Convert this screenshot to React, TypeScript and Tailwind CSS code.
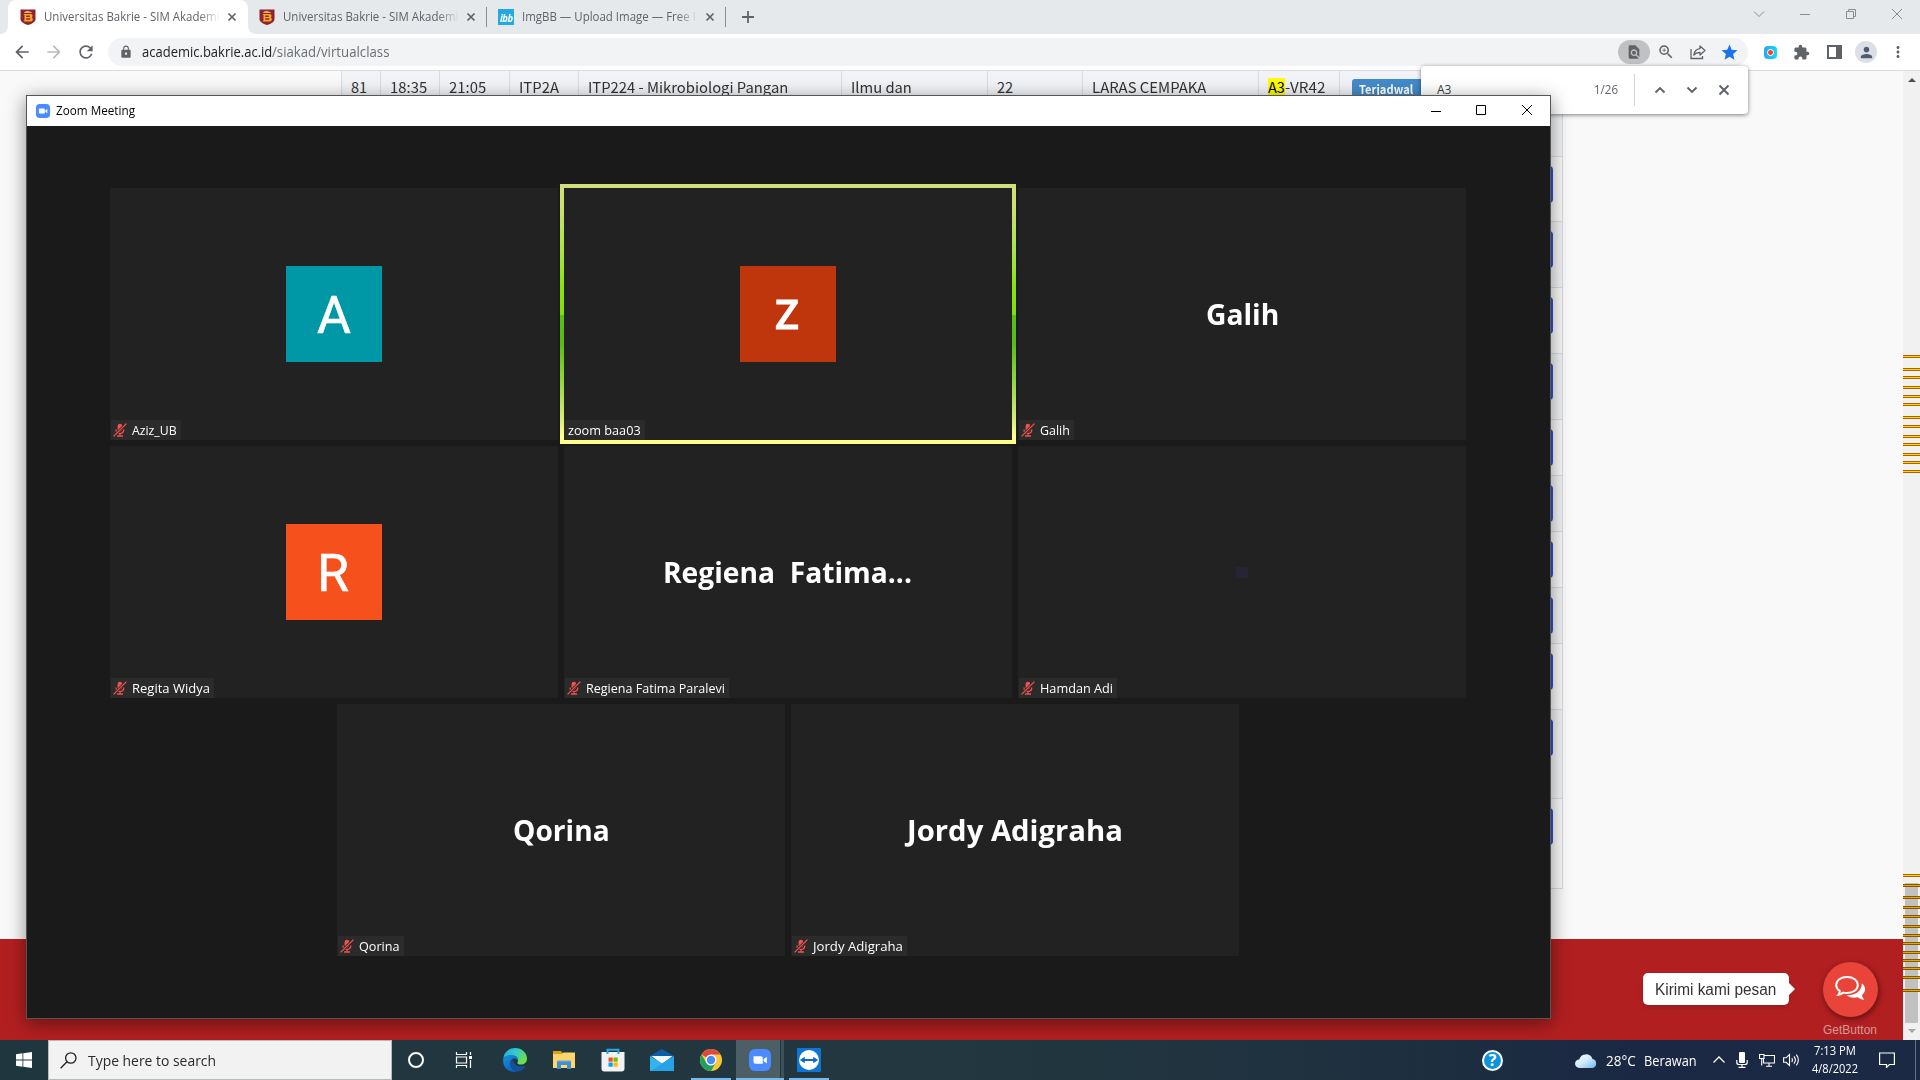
import { useLayoutEffect, useRef, useState, type ReactNode } from 'react';
import {
  MdArrowBack,
  MdArrowForward,
  MdRefresh,
  MdLock,
  MdZoomIn,
  MdStar,
  MdExtension,
  MdMoreVert,
  MdPerson,
  MdFindInPage,
} from 'react-icons/md';

/* Text squeezed or stretched horizontally to a fixed width. */
function Fit({ w, className = '', children }: { w: number; className?: string; children: ReactNode }) {
  const ref = useRef<HTMLSpanElement>(null);
  const [scale, setScale] = useState(1);
  useLayoutEffect(() => {
    if (ref.current) setScale(w / ref.current.offsetWidth);
  }, [w]);
  return (
    <span className={`block shrink-0 whitespace-pre ${className}`} style={{ width: w }}>
      <span ref={ref} className="inline-block origin-left" style={{ transform: `scaleX(${scale})` }}>
        {children}
      </span>
    </span>
  );
}

const ui = 'font-["Open_Sans","Noto_Sans",sans-serif]';

/* ---------- browser ---------- */

function Crest() {
  return (
    <svg viewBox="0 0 16 16" className="h-4 w-4 shrink-0">
      <path d="M.5.5h15V10c0 3-3 4.600-7.500 6C3.500 14.600.5 13 .5 10z" fill="#8e2430" />
      <path d="M3.500 5h7.300c2.200 0 2.200 3.200.7 3.500 2 .4 1.800 4-.7 4H3.500l1-1V6z" fill="#f7a823" />
      <path d="M6.200 6.600h3.600v1.300H6.200zM6.200 9.300h4v1.500h-4z" fill="#8e2430" />
      <path d="M4 4c1-2.400 2.600-1 3.800-2.200C9 3 11 2 12 4z" fill="#e9b06a" />
    </svg>
  );
}

function TabClose({ className = '' }: { className?: string }) {
  return (
    <svg viewBox="0 0 16 16" className={`h-4 w-4 shrink-0 ${className}`}>
      <path d="M4.500 4.500l7 7M11.500 4.500l-7 7" stroke="#5f6368" strokeWidth="1.7" />
    </svg>
  );
}

function TabTitle({ w, children }: { w: number; children: ReactNode }) {
  return (
    <div className="w-[176px] shrink-0 text-xs leading-5 text-[#5f6368] [mask-image:linear-gradient(to_right,black_88%,transparent_100%)]">
      <Fit w={w}>{children}</Fit>
    </div>
  );
}

function TabStrip() {
  return (
    <div className={`flex h-[34px] shrink-0 items-center bg-[#e5e9ec] text-[#5f6368] ${ui}`}>
      <div className="flex h-full w-2 shrink-0 items-end bg-white">
        <div className="h-full w-full rounded-br-lg bg-[#e5e9ec]" />
      </div>
      <div className="flex h-full w-[240px] shrink-0 items-center rounded-t-lg bg-white pl-3">
        <Crest />
        <div className="ml-2"><TabTitle w={175}>Universitas Bakrie - SIM Akademi</TabTitle></div>
        <TabClose className="ml-1" />
      </div>
      <div className="h-full w-2 shrink-0 bg-white">
        <div className="h-full w-full rounded-bl-lg bg-[#e5e9ec]" />
      </div>
      <div className="flex h-full w-[230px] shrink-0 items-center pl-[3px]">
        <Crest />
        <div className="ml-2"><TabTitle w={175}>Universitas Bakrie - SIM Akademi</TabTitle></div>
        <TabClose className="ml-1" />
      </div>
      <div className="h-5 w-px bg-[#8a8d91]" />
      <div className="flex h-full w-[238px] shrink-0 items-center pl-[11px]">
        <div className="flex h-4 w-4 items-center justify-center bg-[#23a8e0] text-[11px] font-bold italic leading-none tracking-tighter text-white">
          <Fit w={13}>ibb</Fit>
        </div>
        <div className="ml-2"><TabTitle w={174}>ImgBB — Upload Image — Free I</TabTitle></div>
        <TabClose className="ml-1" />
      </div>
      <div className="h-5 w-px bg-[#8a8d91]" />
      <svg viewBox="0 0 14 14" className="ml-[15px] h-3.5 w-3.5">
        <path d="M7 1v12M1 7h12" stroke="#5f6368" strokeWidth="1.800" />
      </svg>
      <div className="ml-auto flex h-full items-center pb-[6px]">
        <svg viewBox="0 0 12 12" className="mr-[34px] h-3 w-3" fill="none" stroke="#8b8e91">
          <path d="M1 3.500l5 5 5-5" />
        </svg>
        <svg viewBox="0 0 12 12" className="mr-[34px] h-3 w-3" stroke="#8b8e91">
          <path d="M1 6.500h10" />
        </svg>
        <svg viewBox="0 0 12 12" className="mr-[34px] h-3 w-3" fill="none" stroke="#8b8e91">
          <path d="M1.500 3.500h7v7h-7zM3.500 3.500v-2h7v7h-2" />
        </svg>
        <svg viewBox="0 0 12 12" className="mr-[17px] h-3 w-3" stroke="#8b8e91">
          <path d="M1 1l10 10M11 1L1 11" />
        </svg>
      </div>
    </div>
  );
}

function Toolbar() {
  return (
    <div className={`flex h-[37px] shrink-0 items-center border-b border-[#d9dbde] bg-white ${ui}`}>
      <MdArrowBack className="ml-3 h-5 w-5 text-[#5f6368]" />
      <MdArrowForward className="ml-3 h-5 w-5 text-[#b9bbbe]" />
      <MdRefresh className="ml-3 h-5 w-5 text-[#5f6368]" />
      <div className="ml-3 flex h-7 w-[1640px] shrink-0 items-center rounded-full bg-[#f1f3f4] pl-[11px]">
        <MdLock className="h-[14px] w-[14px] text-[#5f6368]" />
        <Fit w={130} className="ml-[9px] text-sm leading-5 text-[#202124]">academic.bakrie.ac.id</Fit>
        <Fit w={117} className="text-sm leading-5 text-[#6b6f73]">/siakad/virtualclass</Fit>
        <div className="ml-auto flex h-6 w-8 items-center justify-center rounded-full bg-[#bfc1c3]">
          <MdFindInPage className="h-4 w-4 text-[#5f6368]" />
        </div>
        <MdZoomIn className="ml-[7px] h-[18px] w-[18px] text-[#5f6368]" />
        <svg viewBox="0 0 16 16" className="ml-[15px] h-4 w-4" fill="none" stroke="#5f6368" strokeWidth="1.300">
          <path d="M1 5v9.500h11.500V12" />
          <path d="M10 2l5 4.500-5 4.500V8.500C7 8.400 5.200 9.300 3.800 11 4.300 7.500 6.500 5 10 4.600z" strokeLinejoin="round" />
        </svg>
        <MdStar className="ml-[14px] mr-[9px] h-[19px] w-[19px] text-[#1a73e8]" />
      </div>
      <div className="ml-4 flex h-[13px] w-[13px] items-center justify-center rounded-sm bg-gradient-to-r from-[#25a7fb] to-[#10dcf0]">
        <div className="h-[7px] w-[7px] rounded-full border border-white bg-[#f4432c]" />
      </div>
      <MdExtension className="ml-[16px] h-[17px] w-[17px] text-[#5f6368]" />
      <div className="ml-[17px] h-[14px] w-[15px] border-2 border-r-[6px] border-[#5f6368]" />
      <div className="ml-[13px] flex h-[22px] w-[22px] items-center justify-center rounded-full bg-[#dcdfe6]">
        <MdPerson className="h-[17px] w-[17px] text-[#4f5b71]" />
      </div>
      <MdMoreVert className="ml-[12px] h-[18px] w-[18px] text-[#5f6368]" />
    </div>
  );
}

const rows = [65, 66, 66, 66, 56, 56, 56, 56, 66, 89, 90];

function Cell({ className, children }: { className: string; children?: ReactNode }) {
  return (
    <div className={`shrink-0 border-r border-[#d9dbdd] pl-[9px] pt-[5px] leading-[22px] ${className}`}>{children}</div>
  );
}

function ClassTable() {
  return (
    <div className='ml-[341px] w-[1222px] border-l border-[#d9dbdd] font-["Noto_Sans_CJK_SC",sans-serif] text-[14.500px] text-[#333]'>
      <div className="flex h-[86px] border-b border-[#d9dbdd] bg-[#f2f3f6]">
        <Cell className="w-[39px]"><Fit w={16}>81</Fit></Cell>
        <Cell className="w-[59px]"><Fit w={37}>18:35</Fit></Cell>
        <Cell className="w-[70px] pl-[8px]"><Fit w={37}>21:05</Fit></Cell>
        <Cell className="w-[69px]"><Fit w={40}>ITP2A</Fit></Cell>
        <Cell className="w-[263px] pl-[8px]"><Fit w={200}>ITP224 - Mikrobiologi Pangan</Fit></Cell>
        <Cell className="w-[146px]"><Fit w={61}>Ilmu dan</Fit></Cell>
        <Cell className="w-[95px]"><Fit w={16}>22</Fit></Cell>
        <Cell className="w-[176px]"><Fit w={114}>LARAS CEMPAKA</Fit></Cell>
        <Cell className="flex w-[81px]">
          <Fit w={17} className="mt-0.5 h-5 bg-[#ffff00] leading-[18px] text-black">A3</Fit>
          <Fit w={40}>-VR42</Fit>
        </Cell>
        <div className="flex grow justify-start border-r border-[#d9dbdd] pl-[12px] pt-2">
          <div className="h-6 w-[74px] rounded-[3px] bg-[#428bca] pl-[7px] text-[12px] font-bold leading-[19px] text-white">
            <Fit w={54}>Terjadwal</Fit>
          </div>
        </div>
      </div>
      {rows.map((h, i) => (
        <div
          key={i}
          className={`flex justify-end border-b border-r border-[#d9dbdd] pr-[9px] pt-[9px] ${i % 2 ? 'bg-[#f2f3f6]' : 'bg-[#f9f9f9]'}`}
          style={{ height: h }}
        >
          <div className="h-[37px] w-20 rounded-[4px] bg-[#354fd0]" />
        </div>
      ))}
    </div>
  );
}

const marks = [
  356, 369, 377, 387, 396, 404, 417, 426, 436, 444, 454, 462, 471, 875, 885, 897, 907, 916, 926, 935, 943, 952, 960, 968,
  977, 990,
];

function Scrollbar() {
  return (
    <div className="relative flex w-[17px] shrink-0 flex-col items-center bg-[#f1f1f1]">
      <svg viewBox="0 0 8 4" className="mt-[7px] h-1 w-2"><path d="M4 0l4 4H0z" fill="#505050" /></svg>
      <div className="mt-auto h-[140px] w-[13px] bg-[#c1c1c1]" />
      <svg viewBox="0 0 8 4" className="mb-[7px] mt-1.5 h-1 w-2"><path d="M4 4l4-4H0z" fill="#a3a3a3" /></svg>
      {marks.map((y) => (
        <div
          key={y}
          className={`absolute left-0 h-[3px] w-full border-y ${y > 880 ? 'border-[#925000] bg-[#d4b106]' : 'border-[#b06000] bg-[#ffdd00]'}`}
          style={{ top: y - 72 }}
        />
      ))}
    </div>
  );
}

function FindBar() {
  return (
    <div className={`absolute left-[1421px] top-[66px] flex h-12 w-[327px] items-center rounded bg-white text-xs text-[#5f6368] shadow-[0_1px_4px_rgba(0,0,0,0.5)] ${ui}`}>
      <Fit w={14} className="ml-4 text-[#3c4043]">A3</Fit>
      <Fit w={24} className="ml-[143px]">1/26</Fit>
      <div className="ml-4 h-8 w-px bg-[#d4d6d9]" />
      <svg viewBox="0 0 12 12" className="ml-[19px] h-3 w-3" fill="none" stroke="#5f6368" strokeWidth="1.900"><path d="M1.500 8.500L6 4l4.500 4.500" /></svg>
      <svg viewBox="0 0 12 12" className="ml-5 h-3 w-3" fill="none" stroke="#5f6368" strokeWidth="1.900"><path d="M1.500 3.500L6 8l4.500-4.500" /></svg>
      <svg viewBox="0 0 12 12" className="ml-5 h-3 w-3" stroke="#5f6368" strokeWidth="2"><path d="M1.500 1.500l9 9M10.500 1.500l-9 9" /></svg>
    </div>
  );
}

function ChatWidget() {
  return (
    <div className='flex justify-end pr-[25px] pt-[23px] font-["Liberation_Sans",sans-serif]'>
      <div className="relative mt-[11px] flex h-8 w-[146px] items-center rounded-[5px] bg-white pl-3 pt-px text-base text-[#333] shadow-md">
        <Fit w={121}>Kirimi kami pesan</Fit>
        <svg viewBox="0 0 6 12" className="absolute -right-[6px] top-2.5 h-3 w-1.5"><path d="M0 0l6 6-6 6z" fill="#fff" /></svg>
      </div>
      <div className="ml-[34px] flex w-[55px] flex-col items-center">
        <div className="flex h-[55px] w-[55px] items-center justify-center rounded-full bg-[#e8443a] pb-[3px] pr-px shadow-[1px_2px_6px_rgba(0,0,0,0.5)]">
          <svg viewBox="0 0 32 26" className="h-[26px] w-8">
            <path d="M27.800 8.200c4.300 3.300 4.300 8.600.2 11.800.2 1.800 1 2.800 2.200 4.700-2.500-.2-4.600-1-6.300-2.400-4 1-8.600.2-11.400-2.100 8.500.4 15.600-4.400 15.300-12z" fill="#fff" />
            <path d="M13 2c6.200 0 10.800 3.400 10.800 8S19.200 18 13 18c-1.300 0-2.500-.1-3.700-.4-1.300 1.200-3 2-4.900 2.200.9-1.100 1.300-2.300 1.400-3.800C3.600 14.600 2.200 12.500 2.200 10 2.200 5.400 6.800 2 13 2z" fill="none" stroke="#fff" strokeWidth="2" />
          </svg>
        </div>
        <Fit w={54} className="-ml-px mt-[5px] text-xs leading-4 text-[#cf9a98]">GetButton</Fit>
      </div>
    </div>
  );
}

/* ---------- meeting window ---------- */

function ZoomLogo({ className }: { className: string }) {
  return (
    <svg viewBox="0 0 22 22" className={className}>
      <rect width="22" height="22" rx="6" fill="#4a8cff" />
      <path d="M4.500 7.200h7.300c1.300 0 2 .8 2 2v5.600H6.500c-1.300 0-2-.8-2-2zM14.600 10.200l3.200-2.500v6.700l-3.200-2.400z" fill="#fff" />
    </svg>
  );
}

function MutedMic() {
  return (
    <svg viewBox="0 0 14 14" className="h-3.5 w-3.5 shrink-0" fill="none">
      <rect x="4.600" y="0.800" width="4.600" height="7.800" rx="2.300" fill="#f0524f" />
      <path d="M3 6.500c.2 5.300 7.600 5.300 7.800 0M7 10.500v2.500M4 13h6" stroke="#f0524f" strokeWidth="1.300" />
      <path d="M.6 13.400L13.400.6" stroke="#2b2b2b" strokeWidth="2.800" />
      <path d="M.6 13.400L13.400.6" stroke="#f0524f" strokeWidth="1.300" />
    </svg>
  );
}

type Person = { name: string; w: number; muted: boolean; center: ReactNode; active?: boolean };

const big = (text: string, w: number) => <Fit w={w} className="text-[29px] font-bold leading-10 text-white">{text}</Fit>;

const people: Person[] = [
  {
    name: 'Aziz_UB', w: 45, muted: true,
    center: <div className="flex h-24 w-24 items-center justify-center bg-[#0097a7] pt-1 font-[Roboto] text-[52px] leading-none text-white [-webkit-text-stroke:0.6px_white]"><Fit w={34}>A</Fit></div>,
  },
  {
    name: 'zoom baa03', w: 73, muted: false, active: true,
    center: <div className="flex h-24 w-24 items-center justify-center bg-[#bf360c] pr-0.5 text-[40px] font-semibold leading-none text-white [-webkit-text-stroke:0.8px_white]"><Fit w={24}>Z</Fit></div>,
  },
  { name: 'Galih', w: 30, muted: true, center: big('Galih', 73) },
  {
    name: 'Regita Widya', w: 78, muted: true,
    center: <div className="flex h-24 w-24 items-center justify-center bg-[#f6511d] pr-0.5 pt-1 font-[Roboto] text-[52px] leading-none text-white [-webkit-text-stroke:0.6px_white]"><Fit w={32}>R</Fit></div>,
  },
  { name: 'Regiena Fatima Paralevi', w: 139, muted: true, center: <div className="pr-0.5">{big('Regiena  Fatima...', 249)}</div> },
  { name: 'Hamdan Adi', w: 73, muted: true, center: <div className="h-[11px] w-3 bg-[#252536]" /> },
  { name: 'Qorina', w: 41, muted: true, center: big('Qorina', 97) },
  { name: 'Jordy Adigraha', w: 90, muted: true, center: big('Jordy Adigraha', 216) },
];

function Tile({ p }: { p: Person }) {
  const body = (
    <div className={`relative flex h-[252px] w-[448px] items-center justify-center bg-[#222] ${ui}`}>
      {p.center}
      <div className={`absolute bottom-0 flex h-5 items-center bg-[#2b2b2b] text-xs leading-5 text-white ${p.muted ? 'left-px gap-[5px] pl-0.5 pr-1' : 'left-0 pl-1 pr-1'}`}>
        {p.muted && <MutedMic />}
        <Fit w={p.w} className="pt-0.5">{p.name}</Fit>
      </div>
    </div>
  );
  if (!p.active) return body;
  return (
    <div className="-m-1 bg-[linear-gradient(to_bottom,#d2df7c_0%,#cfe070_8%,#a5e43c_28%,#88e20c_40%,#84de0a_50.3%,#5cc010_50.4%,#58bc12_61%,#8fd43c_75%,#d6ea78_90%,#ffff8c_97%)] p-1">
      {body}
    </div>
  );
}

function MeetingWindow() {
  return (
    <div className="absolute left-[26px] top-[95px] flex h-[924px] w-[1525px] flex-col border border-[#555] bg-[#1a1a1a] shadow-[0_4px_18px_rgba(0,0,0,0.45)]">
      <div className={`flex h-[30px] shrink-0 items-center bg-white pl-[9px] text-xs text-black ${ui}`}>
        <ZoomLogo className="h-3.5 w-3.5" />
        <Fit w={79} className="ml-1.5">Zoom Meeting</Fit>
        <svg viewBox="0 0 12 12" className="mb-px ml-auto mr-[33px] h-3 w-3" stroke="#000"><path d="M1 6.500h10" /></svg>
        <svg viewBox="0 0 12 12" className="mb-0.5 mr-[34px] h-3 w-3" fill="none" stroke="#000"><path d="M1.500 1.500h9v9h-9z" /></svg>
        <svg viewBox="0 0 12 12" className="mb-0.5 mr-[17px] h-3 w-3" stroke="#000"><path d="M1 1l10 10M11 1L1 11" /></svg>
      </div>
      <div className="flex w-[1522px] flex-col items-center gap-1.5 pt-[62px]">
        {[people.slice(0, 3), people.slice(3, 6), people.slice(6)].map((group, i) => (
          <div key={i} className="flex gap-1.5">
            {group.map((p) => <Tile key={p.name} p={p} />)}
          </div>
        ))}
      </div>
    </div>
  );
}

/* ---------- taskbar ---------- */

function EdgeLogo() {
  return (
    <svg viewBox="0 0 24 24" className="h-6 w-6">
      <defs>
        <linearGradient id="edgeTop" x1="0" y1="0" x2="1" y2="0.500">
          <stop offset="0" stopColor="#2aa8dc" /><stop offset="0.500" stopColor="#31c7d5" /><stop offset="1" stopColor="#6be04a" />
        </linearGradient>
        <linearGradient id="edgeLow" x1="0" y1="0" x2="0.800" y2="1">
          <stop offset="0" stopColor="#1593df" /><stop offset="1" stopColor="#0b5cb5" />
        </linearGradient>
      </defs>
      <path d="M.3 10C1.200 4 6 0 12 0c7 0 12 5 12 10.500 0 4-3 6-6 6-2.500 0-4.300-1-3.600-2 1.600-2.200.3-6.700-4.200-6.700C6 7.600 2 8.500.3 10z" fill="url(#edgeTop)" />
      <path d="M.2 10.500C2 8 5 6.900 8 6.900c4.700 0 7.800 3 7 6.400-.5-2-2.200-3-4-2.700-2.800.5-4 3-3.600 5.800.5 3.500 3.500 6.500 7.500 7.200C7 25.400-1 20.500.2 10.500z" fill="url(#edgeLow)" />
      <path d="M10 10.900c-2.200 1-3 3.500-2.400 6 .9 4 4.500 6.800 8 6.500 3-.8 5.500-2.800 6.800-5.200.2-.5-.2-.7-.6-.5-5.800 2.500-11.600-.8-11.800-6.800z" fill="#134f9c" />
    </svg>
  );
}

function ExplorerIcon() {
  return (
    <svg viewBox="0 0 22 18" className="h-[18px] w-[22px]">
      <path d="M0 0h8l1.500 2H22v2H0z" fill="#e0a012" />
      <path d="M0 3h9l1.500-1.500H22V17H0z" fill="#ffd66b" />
      <path d="M4 18v-8h14v8h-4v-4H8v4z" fill="#3f8fd2" />
      <path d="M4 9.500h14v1.500H4z" fill="#5aa8e2" />
    </svg>
  );
}

function StoreIcon() {
  return (
    <svg viewBox="0 0 24 24" className="h-6 w-6">
      <path d="M6.500 6V1.800h11V6" fill="none" stroke="#27a7e8" strokeWidth="2" />
      <path d="M.5 4h23v16.500a3 3 0 0 1-3 3h-17a3 3 0 0 1-3-3z" fill="#f2f2f2" />
      <path d="M6.500 4v2M17.500 4v2" stroke="#27a7e8" strokeWidth="2" />
      <path d="M7.500 9.500h4.200v4.200H7.500z" fill="#f25022" /><path d="M12.500 9.500h4.200v4.200h-4.200z" fill="#7fba00" />
      <path d="M7.500 14.500h4.200v4.200H7.500z" fill="#00a4ef" /><path d="M12.500 14.500h4.200v4.200h-4.200z" fill="#ffb900" />
    </svg>
  );
}

function MailIcon() {
  return (
    <svg viewBox="0 0 24 22" className="h-[22px] w-6">
      <path d="M0 7L12 0l12 7v6H0z" fill="#0c5ea8" />
      <path d="M1.500 7h21L12 15z" fill="#f4f6f8" />
      <path d="M0 7l12 7.500L24 7v15H0z" fill="#34b4ef" />
      <path d="M24 7L4 20l-4 2h24z" fill="#1f9be3" opacity=".7" />
    </svg>
  );
}

function ChromeLogo() {
  return (
    <svg viewBox="0 0 22 22" className="h-[22px] w-[22px]">
      <circle cx="11" cy="11" r="11" fill="#fbc638" />
      <path d="M11 11L1.500 5.500A11 11 0 0 1 20.500 5.500H11z" fill="#db4a3e" />
      <path d="M1.500 5.500A11 11 0 0 0 11 22l4.800-8.200L6.300 13.700z" fill="#1fa15d" />
      <circle cx="11" cy="11" r="5.500" fill="#fff" />
      <circle cx="11" cy="11" r="4.200" fill="#4a8af4" />
    </svg>
  );
}

function TeamViewerIcon() {
  return (
    <svg viewBox="0 0 24 24" className="h-6 w-6">
      <rect width="24" height="24" rx="1" fill="#0d76d4" />
      <circle cx="12" cy="12" r="10" fill="#fff" />
      <path d="M2.800 12l5-3.300v2.200h8.400V8.700l5 3.300-5 3.300v-2.200H7.800v2.200z" fill="#0d6bc4" />
    </svg>
  );
}

function TaskItem({ children, running }: { children: ReactNode; running?: boolean }) {
  return (
    <div className="flex h-10 w-[49px] shrink-0 flex-col items-center">
      <div className="flex h-[38px] items-center pt-0.5">{children}</div>
      {running && <div className="h-0.5 w-10 bg-[#76b9ed]" />}
    </div>
  );
}

function Taskbar() {
  return (
    <div className={`relative z-10 flex h-10 shrink-0 items-center bg-[linear-gradient(to_right,#20363f_0%,#22373f_50%,#1e303f_72%,#1a2843_85%,#1b2944_100%)] text-white ${ui}`}>
      <div className="flex w-12 shrink-0 justify-center">
        <svg viewBox="0 0 16 16" className="h-4 w-4" fill="#fff">
          <path d="M0 2.200L6.500 1.300v6.200H0zM7.300 1.200L16 0v7.500H7.300zM0 8.400h6.500v6.300L0 13.800zM7.300 8.400H16V16l-8.700-1.200z" />
        </svg>
      </div>
      <div className="flex h-10 w-[344px] shrink-0 items-center border border-[#b8bbbb] bg-[#f2f2f2] pl-[11px]">
        <svg viewBox="0 0 17 17" className="h-[17px] w-[17px]" fill="none" stroke="#222" strokeWidth="1.300">
          <circle cx="10.800" cy="6" r="5.200" /><path d="M7 9.800L.6 16.300" />
        </svg>
        <Fit w={128} className="ml-[11px] text-[15px] leading-5 text-[#2b2b2b]">Type here to search</Fit>
      </div>
      <div className="flex w-12 shrink-0 justify-center">
        <div className="h-4 w-4 rounded-full border-2 border-white" />
      </div>
      <div className="flex w-12 shrink-0 justify-center">
        <svg viewBox="0 0 18 16" className="h-4 w-[18px]" fill="none" stroke="#fff" strokeWidth="1.200">
          <path d="M1.500 0v2.500h10V0M1.500 16v-2.500h10V16M1.500 5h10v6h-10zM15.500 0v3M15.500 8v8" />
          <path d="M14 4h3v3h-3z" fill="#fff" stroke="none" />
        </svg>
      </div>
      <div className="w-0.5" />
      <TaskItem><EdgeLogo /></TaskItem>
      <TaskItem><ExplorerIcon /></TaskItem>
      <TaskItem><StoreIcon /></TaskItem>
      <TaskItem><MailIcon /></TaskItem>
      <TaskItem running><ChromeLogo /></TaskItem>
      <div className="ml-px flex h-10 w-12 shrink-0 flex-col">
        <div className="flex h-[38px]">
          <div className="flex h-full w-11 items-center justify-center bg-[#4d5f66] pl-1 pt-0.5"><ZoomLogo className="h-[22px] w-[22px]" /></div>
          <div className="ml-px h-full w-[3px] bg-[#3f5158]" />
        </div>
        <div className="h-0.5 w-12 bg-[#76b9ed]" />
      </div>
      <TaskItem running><TeamViewerIcon /></TaskItem>
      <div className="ml-auto flex h-full items-center">
        <div className="flex h-[21px] w-[21px] items-center justify-center rounded-full border-2 border-white bg-[#0b93dc] text-base font-bold leading-none">?</div>
        <svg viewBox="0 0 22 15" className="ml-[72px] h-[15px] w-[22px]">
          <defs>
            <linearGradient id="cloud" x1="0" y1="0" x2="1" y2="1"><stop offset="0" stopColor="#fff" /><stop offset="0.500" stopColor="#cfe9fb" /><stop offset="1" stopColor="#6db8ee" /></linearGradient>
          </defs>
          <path d="M4.500 15a4.300 4.300 0 0 1-.3-8.600A7 7 0 0 1 17.500 6a4.600 4.600 0 0 1 0 9z" fill="url(#cloud)" />
        </svg>
        <Fit w={30} className="ml-[9px] pt-0.5 text-sm leading-5">28°C</Fit>
        <Fit w={53} className="ml-[8px] pt-0.5 text-sm leading-5">Berawan</Fit>
        <svg viewBox="0 0 12 12" className="ml-4 h-3 w-3" fill="none" stroke="#fff" strokeWidth="1.300"><path d="M.5 8.500L6 3l5.500 5.500" /></svg>
        <svg viewBox="0 0 12 16" className="ml-[11px] h-4 w-3" fill="none" stroke="#fff" strokeWidth="1.200">
          <rect x="3" y="0" width="6" height="11" rx="1" fill="#fff" stroke="none" />
          <path d="M.8 8v2.500c0 1.300 1 2 2.200 2h6c1.200 0 2.200-.7 2.200-2V8M6 12.500v3M2.500 15.400h7" />
        </svg>
        <svg viewBox="0 0 16 14" className="ml-[11px] h-3.5 w-4" fill="none" stroke="#fff" strokeWidth="1.100">
          <path d="M5.500 2.500h10v7.500h-11V6M10 10v3M7 13.300h6M.5 1.500h4.500v4H.5zM2.700 5.500v7" />
        </svg>
        <svg viewBox="0 0 17 14" className="ml-[8px] h-3.5 w-[17px]" fill="none" stroke="#fff" strokeWidth="1.100">
          <path d="M.6 4.800h2.500L6.500 1.500v11L3.100 9.300H.6z" />
          <path d="M8.800 5c.8 1.300.8 2.700 0 4M11 3.300c1.800 2.400 1.800 5 0 7.400M13.300 1.600c2.600 3.400 2.600 7.400 0 10.800" />
        </svg>
        <div className="ml-[12px] flex w-[46px] flex-col items-center text-xs leading-[18px]">
          <Fit w={42}>7:13 PM</Fit>
          <Fit w={46}>4/8/2022</Fit>
        </div>
        <svg viewBox="0 0 16 16" className="ml-[21px] h-4 w-4" fill="none" stroke="#fff" strokeWidth="1.200">
          <path d="M.6 1h14.800v11.500h-5L7.500 15.400V12.500H.6z" />
        </svg>
        <div className="ml-5 mr-1 h-10 w-px bg-[#66728a]" />
      </div>
    </div>
  );
}

export default function App() {
  return (
    <div className="relative flex h-[1080px] w-[1920px] flex-col overflow-hidden bg-[#f9f9f9]">
      <TabStrip />
      <Toolbar />
      <div className="flex min-h-0 grow">
        <div className="flex w-[1903px] flex-col">
          <div className="h-[868px] shrink-0 overflow-hidden"><ClassTable /></div>
          <div className="h-[101px] shrink-0 bg-[#b21f21]"><ChatWidget /></div>
        </div>
        <Scrollbar />
      </div>
      <FindBar />
      <MeetingWindow />
      <Taskbar />
    </div>
  );
}
